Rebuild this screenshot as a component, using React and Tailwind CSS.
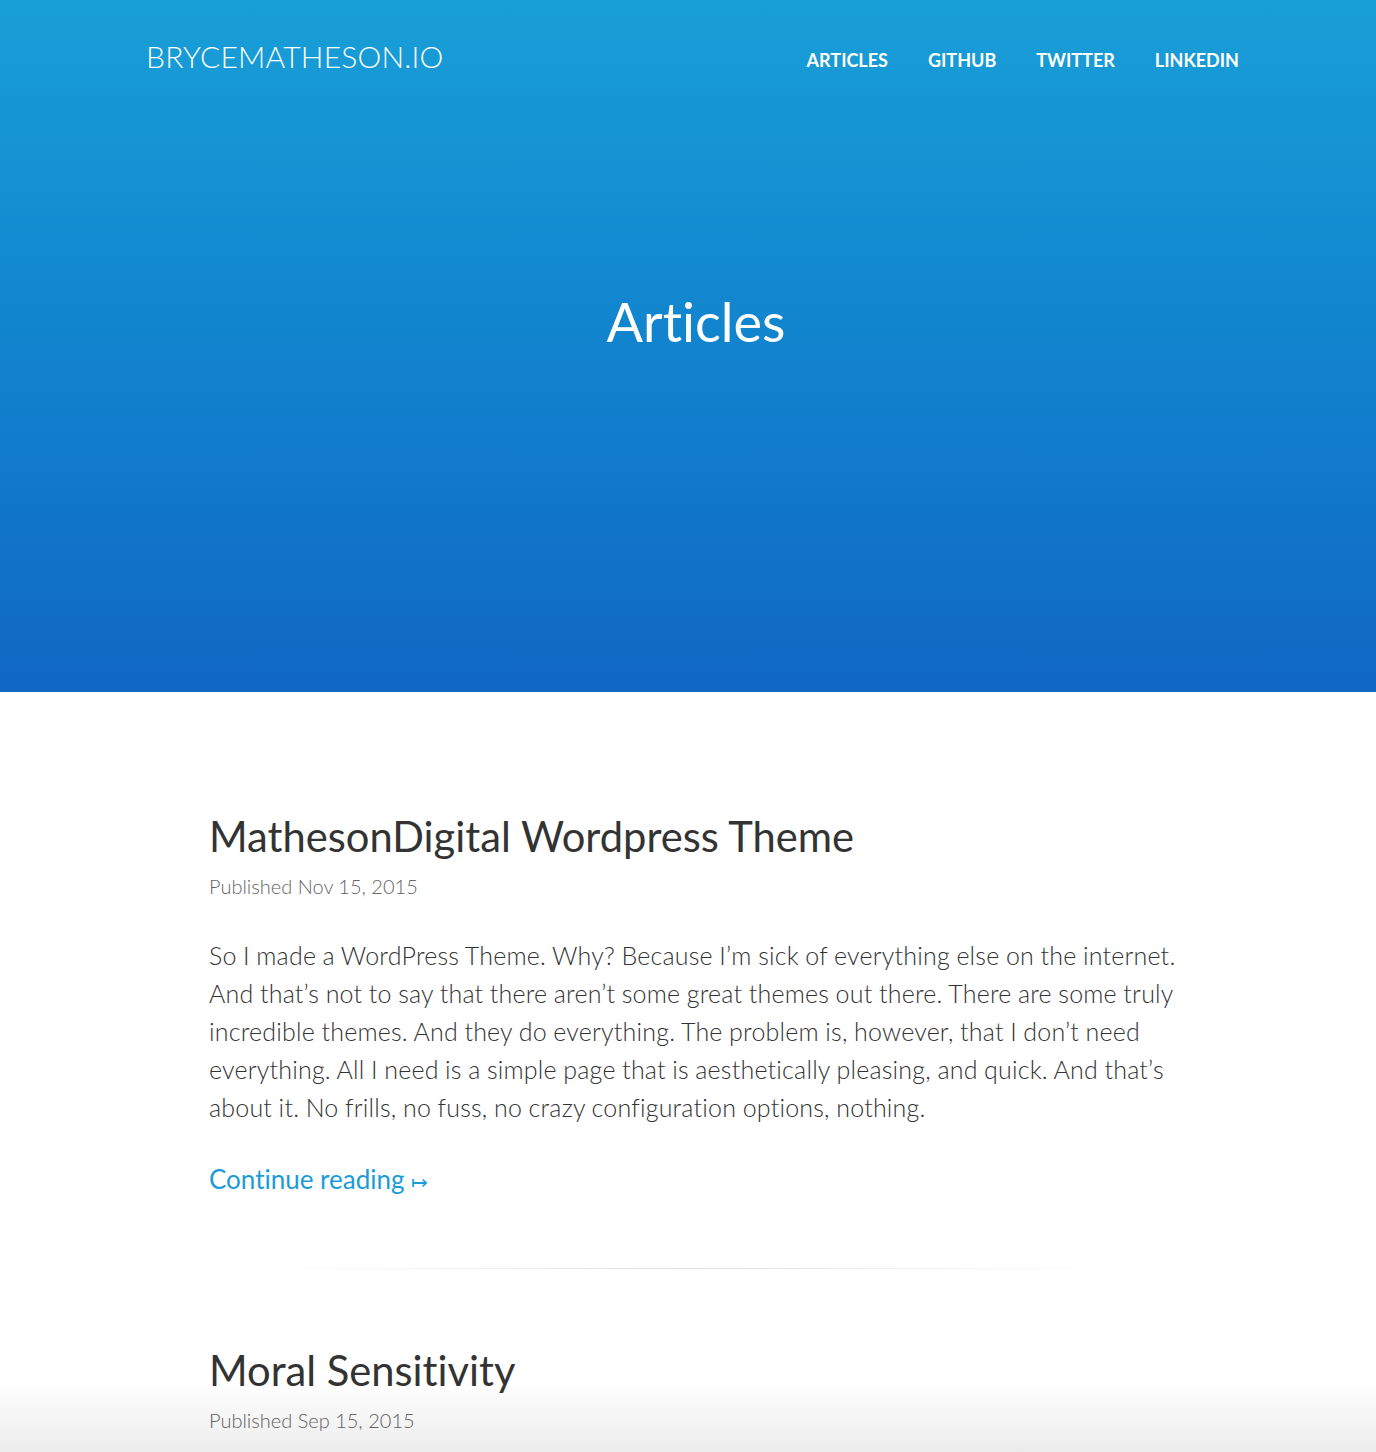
export default function App() {
  const lato = { fontFamily: "Lato, 'Open Sans', sans-serif" };

  return (
    <div className="min-h-screen bg-white text-[#333] [font-variant-ligatures:none]" style={lato}>
      {/* hero */}
      <header className="h-[692px] bg-gradient-to-b from-[#199fd7] to-[#1167c4] text-white">
        <div className="flex items-start justify-between pl-[146px] pr-[137px] pt-[37px]">
          <a href="#" className="text-[30px] font-light leading-[38px] tracking-[0.2px]">
            BRYCEMATHESON.IO
          </a>
          <nav className="flex gap-[40px] pt-[12px] text-[18px] font-bold leading-[22px]">
            <a href="#">ARTICLES</a>
            <a href="#">GITHUB</a>
            <a href="#">TWITTER</a>
            <a href="#">LINKEDIN</a>
          </nav>
        </div>
        <h1 className="pl-[16px] pt-[215px] text-center text-[54px] font-normal leading-[64px]">
          Articles
        </h1>
      </header>

      {/* posts */}
      <main className="mx-auto w-[980px] pl-[11px] pt-[116px]">
        <article>
          <h2 className="text-[41.7px] font-normal leading-[56px] text-[#333]">
            MathesonDigital Wordpress Theme
          </h2>
          <p className="mt-[10px] text-[20px] font-light leading-[24px] text-[#666]">
            Published Nov 15, 2015
          </p>
          <p className="mt-[38px] text-[25px] font-light leading-[38px] tracking-[0.2px] [word-spacing:-0.5px] text-[#333]">
            So I made a WordPress Theme. Why? Because I’m sick of everything else on the internet.
            And that’s not to say that there aren’t some great themes out there. There are some truly
            incredible themes. And they do everything. The problem is, however, that I don’t need
            everything. All I need is a simple page that is aesthetically pleasing, and quick. And that’s
            about it. No frills, no fuss, no crazy configuration options, nothing.
          </p>
          <a href="#" className="mt-[36px] inline-block text-[26px] font-normal leading-[34px] text-[#1b9bd7]">
            Continue reading <span className="text-[20px]">↦</span>
          </a>
        </article>

        <div className="my-[70px] ml-[50px] mr-[60px] h-px bg-gradient-to-r from-transparent via-[#e0e0e0] to-transparent" />

        <article>
          <h2 className="pt-[3px] text-[41.7px] font-normal leading-[56px] text-[#333]">
            Moral Sensitivity
          </h2>
          <p className="mt-[10px] text-[20px] font-light leading-[24px] text-[#666]">
            Published Sep 15, 2015
          </p>
          <p className="mt-[38px] text-[25px] font-light leading-[38px] text-[#333]">
            &nbsp;
          </p>
        </article>
      </main>

      {/* bottom fade overlay */}
      <div className="pointer-events-none fixed bottom-0 left-0 right-0 h-[70px] bg-gradient-to-b from-white to-[#ececec] mix-blend-multiply" />
    </div>
  );
}
